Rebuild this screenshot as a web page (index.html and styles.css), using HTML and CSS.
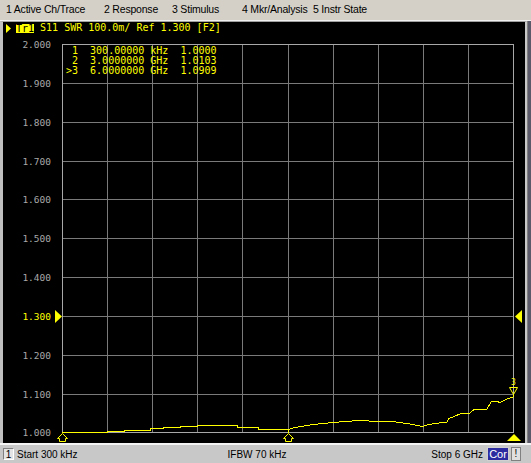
FILE: index.html
```html
<!DOCTYPE html>
<html>
<head>
<meta charset="utf-8">
<link rel="stylesheet" href="styles.css">
</head>
<body>
<div class="screen">
  <nav class="menubar">
    <span class="menu-item">1 Active Ch/Trace</span>
    <span class="menu-item">2 Response</span>
    <span class="menu-item">3 Stimulus</span>
    <span class="menu-item">4 Mkr/Analysis</span>
    <span class="menu-item">5 Instr State</span>
  </nav>
  <div class="chan-row">
    <main class="chan">
      <svg class="plot" viewBox="3 22 522 421" width="522" height="421">
        <g class="grid">
          <line x1="107.5" y1="44" x2="107.5" y2="432"/>
          <line x1="152.5" y1="44" x2="152.5" y2="432"/>
          <line x1="197.5" y1="44" x2="197.5" y2="432"/>
          <line x1="242.5" y1="44" x2="242.5" y2="432"/>
          <line x1="288.5" y1="44" x2="288.5" y2="432"/>
          <line x1="333.5" y1="44" x2="333.5" y2="432"/>
          <line x1="378.5" y1="44" x2="378.5" y2="432"/>
          <line x1="423.5" y1="44" x2="423.5" y2="432"/>
          <line x1="468.5" y1="44" x2="468.5" y2="432"/>
          <line x1="62" y1="83.5" x2="513" y2="83.5"/>
          <line x1="62" y1="122.5" x2="513" y2="122.5"/>
          <line x1="62" y1="161.5" x2="513" y2="161.5"/>
          <line x1="62" y1="199.5" x2="513" y2="199.5"/>
          <line x1="62" y1="238.5" x2="513" y2="238.5"/>
          <line x1="62" y1="277.5" x2="513" y2="277.5"/>
          <line x1="62" y1="316.5" x2="513" y2="316.5"/>
          <line x1="62" y1="355.5" x2="513" y2="355.5"/>
          <line x1="62" y1="394.5" x2="513" y2="394.5"/>
        </g>
        <rect class="frame" x="62.5" y="44.5" width="451" height="388"/>
        <g class="ylabels">
          <text x="51" y="48">2.000</text>
          <text x="51" y="87">1.900</text>
          <text x="51" y="126">1.800</text>
          <text x="51" y="165">1.700</text>
          <text x="51" y="203">1.600</text>
          <text x="51" y="242">1.500</text>
          <text x="51" y="281">1.400</text>
          <text x="51" y="320" class="ref">1.300</text>
          <text x="51" y="359">1.200</text>
          <text x="51" y="398">1.100</text>
          <text x="51" y="436">1.000</text>
        </g>
        <polygon class="ymark" points="55,310 62,316.5 55,323"/>
        <polygon class="ymark" points="522,310 515,316.5 522,323"/>
        <polyline class="trace" points="62,432.5 107,432.5 108,431.5 124,431.5 125,430.5 150,430.5 151,428.5 163,428.5 164,427.5 180,427.5 181,426.5 197,426.5 198,425.5 225,425.5 230,425 237,425.5 238,427.5 258,427.5 259,429.5 288,429.5 295,427.5 313,424.5 333,422.5 345,421.5 360,420.5 377,421.5 393,421.5 410,424 423,426.5 428,424.5 447,422 449,418.5 460,414 470,413 474,409.5 487,409 491,402 497,401.5 500,402.5 507,399 513,397"/>
        <g class="mkr">
          <polygon points="62.5,433.5 67.5,438.5 65.5,438.5 65.5,441.5 59.5,441.5 59.5,438.5 57.5,438.5"/>
          <line x1="288.5" y1="429.5" x2="288.5" y2="433"/>
          <polygon points="288.5,433.5 293.5,438.5 291.5,438.5 291.5,441.5 285.5,441.5 285.5,438.5 283.5,438.5"/>
          <polygon points="509.5,387.5 517.5,387.5 513.5,394.5"/>
          <line x1="513.5" y1="394.5" x2="513.5" y2="397"/>
        </g>
        <text class="mkr-num" x="511" y="385">3</text>
        <polygon class="ymark" points="514,434 521,441 507,441"/>
      </svg>
      <div class="title">
        <svg class="title-arrow" width="5" height="9" viewBox="0 0 5 9"><polygon points="0,0 5,4.5 0,9"/></svg>
        <span class="tr">Tr1</span><span class="title-text"> S11 SWR 100.0m/ Ref 1.300 [F2]</span>
      </div>
      <div class="mkr-table">
        <div class="mkr-row"> 1  300.00000 kHz  1.0000</div>
        <div class="mkr-row"> 2  3.0000000 GHz  1.0103</div>
        <div class="mkr-row">&gt;3  6.0000000 GHz  1.0909</div>
      </div>
    </main>
    <div class="edge"></div>
  </div>
  <footer class="statusbar">
    <span class="ch-num">1</span>
    <span class="stat start">Start 300 kHz</span>
    <span class="stat ifbw">IFBW 70 kHz</span>
    <span class="stat stop">Stop 6 GHz</span>
    <span class="cor">Cor</span>
    <span class="bang">!</span>
  </footer>
</div>
</body>
</html>
```

FILE: styles.css
```css
* { box-sizing: border-box; }
html, body {
  margin: 0;
  padding: 0;
  background: #d4d0c8;
}
.screen {
  width: 531px;
  height: 463px;
  display: flex;
  flex-direction: column;
  overflow: hidden;
}
.menubar {
  height: 20px;
  flex: none;
  display: grid;
  grid-template-columns: 98px 68px 70px 71px auto;
  padding-left: 6px;
  background: #d4d0c8;
  font-family: "Liberation Sans", Arial, sans-serif;
  font-size: 10.5px;
  letter-spacing: -0.2px;
  line-height: 18px;
  color: #000;
  white-space: nowrap;
}
.chan-row {
  height: 423px;
  flex: none;
  display: flex;
  border-top: 1px solid #f0f0f0;
}
.chan {
  position: relative;
  width: 527px;
  flex: none;
  background: #000;
  border-top: 1px solid #a0a0a0;
  border-left: 3px solid #c0c0c0;
  border-right: 2px solid #c8c8c8;
}
.edge {
  flex: 1;
  background: #5a5a6a;
  border-left: 1px solid #808080;
}
.plot {
  position: absolute;
  left: 0;
  top: 0;
  display: block;
}
.grid line {
  stroke: #7a7a7a;
  stroke-width: 1;
  shape-rendering: crispEdges;
}
.frame {
  fill: none;
  stroke: #a8a8a8;
  stroke-width: 1;
  shape-rendering: crispEdges;
}
.ylabels text {
  font-family: "DejaVu Sans Mono", "Liberation Mono", monospace;
  font-size: 9.5px;
  fill: #a8a8a8;
  text-anchor: end;
}
.ylabels text.ref { fill: #ffff00; }
.ymark { fill: #ffff00; }
.trace {
  fill: none;
  stroke: #ffff00;
  stroke-width: 1;
  shape-rendering: crispEdges;
}
.mkr polygon, .mkr line {
  fill: none;
  stroke: #ffff00;
  stroke-width: 1;
}
.mkr-num {
  font-family: "DejaVu Sans Mono", monospace;
  font-size: 8px;
  fill: #ffff00;
}
.title {
  display: flex;
  align-items: center;
  height: 10px;
  margin-top: 1px;
  padding-left: 3px;
  font-family: "DejaVu Sans Mono", "Liberation Mono", monospace;
  font-size: 10px;
  color: #ffff00;
  white-space: pre;
  position: relative;
}
.title-arrow { display: block; margin-right: 5px; fill: #ffff00; }
.tr {
  display: inline-block;
  height: 9px;
  line-height: 9px;
  background: #ffff00;
  color: #000;
}
.title-text { line-height: 10px; }
.mkr-table {
  position: absolute;
  left: 63px;
  top: 24px;
  font-family: "DejaVu Sans Mono", "Liberation Mono", monospace;
  font-size: 10px;
  line-height: 10px;
  color: #ffff00;
}
.mkr-row {
  white-space: pre;
  height: 10px;
}
.statusbar {
  height: 20px;
  flex: none;
  display: grid;
  grid-template-columns: 11px 173px 132px 168px 22px 12px;
  column-gap: 0;
  align-items: center;
  padding-left: 3px;
  background: #c8c8c8;
  border-top: 2px solid #f4f4f4;
  font-family: "Liberation Sans", Arial, sans-serif;
  font-size: 10px;
  color: #000;
  white-space: nowrap;
}
.ch-num {
  height: 12px;
  line-height: 11px;
  text-align: center;
  background: #e4e4e4;
  border: 1px solid #808080;
  border-right-color: #fff;
  border-bottom-color: #fff;
}
.start { padding-left: 3px; }
.ifbw { text-align: center; padding-left: 8px; }
.stop { text-align: right; padding-right: 4px; }
.cor {
  height: 14px;
  line-height: 12px;
  text-align: center;
  background: #2c2ca0;
  color: #fff;
  border: 1px solid #d0d0d0;
  font-size: 11px;
}
.bang {
  height: 14px;
  line-height: 12px;
  text-align: center;
  background: #e0e0e0;
  border: 1px solid #808080;
  margin-left: 2px;
}
```
